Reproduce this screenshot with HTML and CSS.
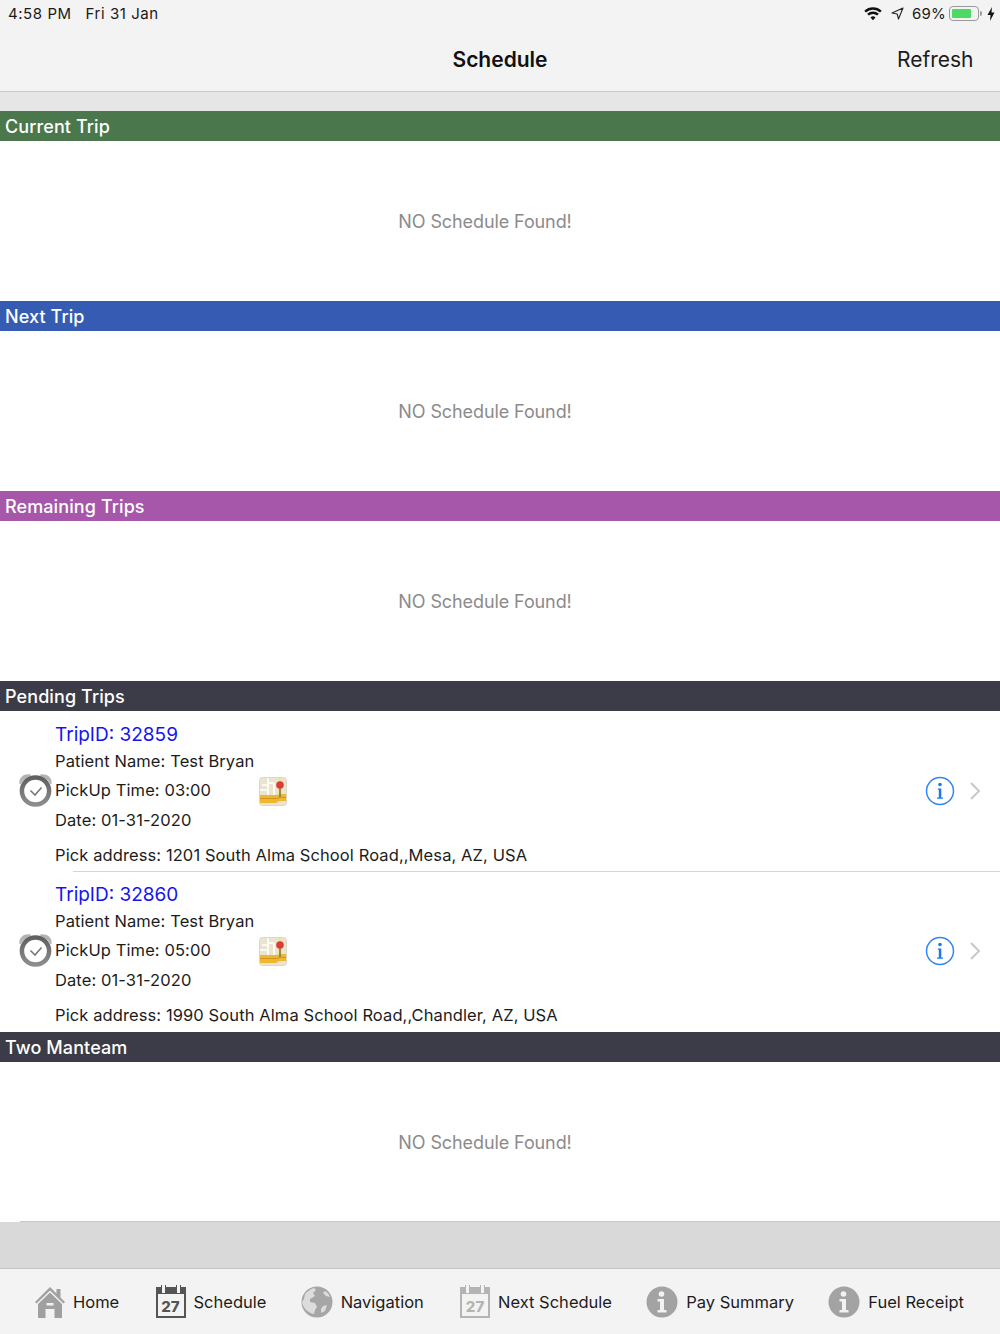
FILE: index.html
```html
<!DOCTYPE html>
<html lang="en">
<head>
<meta charset="utf-8">
<title>Schedule</title>
<link rel="stylesheet" href="styles.css">
</head>
<body>
<svg class="defs" width="0" height="0" aria-hidden="true">
  <defs>
    <linearGradient id="ring" x1="0" y1="0" x2="0" y2="1">
      <stop offset="0" stop-color="#5f6062"/>
      <stop offset="1" stop-color="#8c8d8f"/>
    </linearGradient>
    <symbol id="clock" viewBox="0 0 34 34">
      <path d="M.5 11C-.5 4.500 5 .2 11.500 1.500L12 3.200C7 4.500 3.500 7 1.800 11Z" fill="#b4b4b4"/>
      <path d="M32.500 11C33.500 4.500 28 .2 21.500 1.500L21 3.200C26 4.500 29.500 7 31.200 11Z" fill="#b4b4b4"/>
      <circle cx="16.500" cy="18" r="13.600" fill="#fff" stroke="url(#ring)" stroke-width="4.500"/>
      <path d="M11.500 17.500l4.500 4.500 6.500-7.500" fill="none" stroke="#77787a" stroke-width="1.600"/>
    </symbol>
    <symbol id="map" viewBox="0 0 28 29">
      <rect x=".5" y=".5" width="27" height="28" rx="3" fill="#ebe4cf" stroke="#dcd7c7"/>
      <path d="M9 1v9M3 8h5l1 2v8M15 6v12M9 6h6M1 13h7" fill="none" stroke="#fff" stroke-width="1.600"/>
      <path d="M19 1h4v17h-4z" fill="#efe3a0"/>
      <path d="M1 18h17l3-1h6v7h-7l-3 2H1z" fill="#eeb82e"/>
      <path d="M1 21.500h17l3-1h6" fill="none" stroke="#d5951c" stroke-width="1"/>
      <path d="M21 9v11" stroke="#7d7c4c" stroke-width="1.600"/>
      <circle cx="21" cy="8" r="3.800" fill="#dd3b33"/>
    </symbol>
    <symbol id="info-circle" viewBox="0 0 30 30">
      <circle cx="15" cy="15" r="13.500" fill="none" stroke="#2f86f6" stroke-width="1.500"/>
      <circle cx="15" cy="8.500" r="1.800" fill="#1c78f2"/>
      <path d="M12.800 12.500h3.500v9h1.700v1.300h-6v-1.300h1.800v-7.700h-1z" fill="#1c78f2"/>
    </symbol>
    <symbol id="chevron" viewBox="0 0 12 20">
      <path d="M2 2l8 8-8 8" fill="none" stroke="#c7c7cc" stroke-width="2"/>
    </symbol>
    <symbol id="home" viewBox="0 0 30 32">
      <path d="M0 16 15 1l6.500 6.500V3h4v8.500L30 16l-1.500 1.500L15 4.500 1.500 17.500Z" fill="#a0a0a0"/>
      <path d="M3 18 15 6.500 27 18v14h-7.500v-9h-9v9H3Z" fill="#a0a0a0"/>
      <path d="M11.500 17h7v2.500h-7z" fill="#f2f2f2"/>
    </symbol>
    <symbol id="globe" viewBox="0 0 32 32">
      <circle cx="16" cy="16" r="15.500" fill="#a6a6a6"/>
      <path d="M4 8c2-2 5-5 9-6l2 2-3 3 2 3-3 2-2 1 0 3 5 1 2 4-2 3-1 4c-6-1-11-6-12-12l2-3ZM22 20l4-1-2 6-4 2 0-4ZM24 5c2 1 4 3 5 6l-4-1-3-3Z" fill="#dcdcdc"/>
    </symbol>
    <symbol id="info-solid" viewBox="0 0 32 32">
      <circle cx="16" cy="16" r="15.500" fill="#a3a3a3"/>
      <circle cx="15.500" cy="8" r="2.800" fill="#f2f2f2"/>
      <path d="M11.500 13h6.500v11h2.500v2.500h-9V24h2.500v-8.500h-2.500z" fill="#f2f2f2"/>
    </symbol>
  </defs>
</svg>

<div class="screen">
  <header class="topbar">
    <div class="status">
      <div class="status-left"><span>4:58 PM</span><span>Fri 31 Jan</span></div>
      <div class="status-right">
        <svg class="ic-wifi" viewBox="0 0 20 15"><path d="M10 14.500 7.200 11.300a4 4 0 0 1 5.600 0ZM5.400 9.300l-1.900-2a9.500 9.500 0 0 1 13 0l-1.900 2a6.800 6.800 0 0 0-9.200 0ZM2.200 5.800.3 3.800a14.300 14.300 0 0 1 19.400 0l-1.900 2a11.500 11.500 0 0 0-15.600 0Z" fill="#111"/></svg>
        <svg class="ic-loc" viewBox="0 0 13 13"><path d="M12 1 1 6l5.200 1L7.500 12Z" fill="none" stroke="#222" stroke-width="1.100" stroke-linejoin="round"/></svg>
        <span class="pct">69%</span>
        <span class="battery"><span class="battery-fill"></span></span>
        <span class="battery-cap"></span>
        <svg class="ic-bolt" viewBox="0 0 8 14"><path d="M5 0 .5 8h3L3 14l4.500-8.500h-3Z" fill="#111"/></svg>
      </div>
    </div>
    <div class="nav">
      <span class="nav-side"></span>
      <h1 class="nav-title">Schedule</h1>
      <span class="nav-side nav-action">Refresh</span>
    </div>
  </header>
  <div class="spacer"></div>

  <section>
    <h2 class="band band-green">Current Trip</h2>
    <div class="empty">NO Schedule Found!</div>
  </section>
  <section>
    <h2 class="band band-blue">Next Trip</h2>
    <div class="empty">NO Schedule Found!</div>
  </section>
  <section>
    <h2 class="band band-purple">Remaining Trips</h2>
    <div class="empty">NO Schedule Found!</div>
  </section>
  <section>
    <h2 class="band band-dark">Pending Trips</h2>
    <article class="trip trip-sep">
      <svg class="clock"><use href="#clock"/></svg>
      <div class="trip-text">
        <div class="trip-id">TripID: 32859</div>
        <div class="line line-patient">Patient Name: Test Bryan</div>
        <div class="line line-time"><span class="time">PickUp Time: 03:00</span><svg class="map"><use href="#map"/></svg></div>
        <div class="line line-date">Date: 01-31-2020</div>
        <div class="line line-addr">Pick address: 1201 South Alma School Road,,Mesa, AZ, USA</div>
      </div>
      <svg class="info"><use href="#info-circle"/></svg>
      <svg class="chev"><use href="#chevron"/></svg>
    </article>
    <article class="trip trip-last">
      <svg class="clock"><use href="#clock"/></svg>
      <div class="trip-text">
        <div class="trip-id">TripID: 32860</div>
        <div class="line line-patient">Patient Name: Test Bryan</div>
        <div class="line line-time"><span class="time">PickUp Time: 05:00</span><svg class="map"><use href="#map"/></svg></div>
        <div class="line line-date">Date: 01-31-2020</div>
        <div class="line line-addr">Pick address: 1990 South Alma School Road,,Chandler, AZ, USA</div>
      </div>
      <svg class="info"><use href="#info-circle"/></svg>
      <svg class="chev"><use href="#chevron"/></svg>
    </article>
  </section>
  <section>
    <h2 class="band band-dark">Two Manteam</h2>
    <div class="empty empty-last">NO Schedule Found!</div>
  </section>

  <div class="footer-gap"></div>

  <nav class="tabs">
    <a class="tab"><svg class="tab-ic tab-home"><use href="#home"/></svg>Home</a>
    <a class="tab">
      <span class="cal cal-dark"><span class="cal-num">27</span></span>Schedule
    </a>
    <a class="tab"><svg class="tab-ic tab-round"><use href="#globe"/></svg>Navigation</a>
    <a class="tab">
      <span class="cal cal-light"><span class="cal-num">27</span></span>Next Schedule
    </a>
    <a class="tab"><svg class="tab-ic tab-round"><use href="#info-solid"/></svg>Pay Summary</a>
    <a class="tab"><svg class="tab-ic tab-round"><use href="#info-solid"/></svg>Fuel Receipt</a>
  </nav>
</div>
</body>
</html>
```
FILE: styles.css
```css
* { box-sizing: border-box; }
html, body { margin: 0; padding: 0; }
body {
  font-family: Inter, "Liberation Sans", sans-serif;
  background: #fff;
  color: #1c1c1c;
}
.defs { position: absolute; }
.screen { width: 1000px; height: 1334px; overflow: hidden; display: flex; flex-direction: column; }

.topbar { height: 92px; background: #f3f3f3; border-bottom: 1px solid #c9c9c9; }
.status {
  height: 27px;
  padding: 0 5px 0 8px;
  display: flex;
  justify-content: space-between;
  align-items: center;
  font-size: 15px;
  letter-spacing: .55px;
  color: #1a1a1a;
}
.status-left { display: flex; gap: 14px; }
.status-right { display: flex; align-items: center; }
.ic-wifi { width: 18px; height: 14px; margin-right: 9px; }
.ic-loc { width: 13px; height: 13px; margin-right: 8px; }
.pct { margin-right: 3px; letter-spacing: .2px; }
.battery {
  width: 30px; height: 15px;
  border: 1px solid #9a9a9a;
  border-radius: 4px;
  padding: 2px;
  display: flex;
}
.battery-fill { width: 19px; background: #4cd964; border-radius: 1px; }
.battery-cap { width: 2px; height: 5px; background: #9a9a9a; margin-left: 1px; margin-right: 5px; border-radius: 0 2px 2px 0; }
.ic-bolt { width: 8px; height: 14px; }

.nav { height: 64px; padding: 0 27px 0 0; display: flex; align-items: center; justify-content: space-between; }
.nav-side { width: 76px; font-size: 21px; white-space: nowrap; text-align: right; }
.nav-title { margin: 0 0 0 27px; font-size: 21px; font-weight: 600; color: #111; }
.nav-action { color: #1c1c1c; }

.spacer { height: 19px; background: #e6e6e6; }

.band {
  height: 30px;
  margin: 0;
  padding-left: 5px;
  font-size: 18px;
  font-weight: 500;
  letter-spacing: .1px;
  line-height: 32px;
  color: #fff;
}
.band-green { background: #4a774c; }
.band-blue { background: #355bb3; }
.band-purple { background: #a657aa; }
.band-dark { background: #3b3c47; }

.empty {
  height: 160px;
  padding-right: 30px;
  display: flex;
  align-items: center;
  justify-content: center;
  font-size: 18px;
  letter-spacing: -.1px;
  color: #8b8b8b;
}
.empty-last { position: relative; }
.empty-last::after {
  content: "";
  position: absolute;
  left: 20px; right: 0; bottom: 0;
  height: 1px;
  background: #c6c6c6;
}

.trip {
  position: relative;
  height: 160px;
  padding: 9px 0 0 19px;
  display: flex;
}
.trip-last { height: 161px; }
.trip-sep::after {
  content: "";
  position: absolute;
  left: 73px; right: 0; bottom: -1px;
  height: 1px;
  background: #d4d4d4;
}
.clock { width: 34px; height: 34px; margin: 53px 2px 0 0; flex: none; }
.trip-text { flex: 1; font-size: 16.500px; letter-spacing: .1px; color: #1c1c1c; }
.trip-id { height: 28px; line-height: 30px; font-size: 19px; letter-spacing: 0; color: #1414f0; }
.line { white-space: nowrap; }
.line-patient { height: 27px; line-height: 27px; }
.line-time { height: 30px; line-height: 30px; display: flex; }
.time { width: 204px; }
.map { width: 28px; height: 29px; margin-top: 2px; flex: none; }
.line-date { height: 30px; line-height: 30px; }
.line-addr { height: 36px; padding-top: 4px; line-height: 32px; }
.info { width: 30px; height: 30px; margin: 56px 0 0; flex: none; }
.chev { width: 12px; height: 20px; margin: 61px 19px 0 14px; flex: none; }

.footer-gap { height: 47px; background: #d9d9d9; border-bottom: 1px solid #c6c6c6; }

.tabs {
  flex: 1;
  padding: 0 36px 0 35px;
  background: #f3f3f3;
  display: flex;
  align-items: center;
  justify-content: space-between;
  font-size: 16.500px;
  color: #1c1c1c;
}
.tab { display: flex; align-items: center; white-space: nowrap; }
.tab-ic { flex: none; }
.tab-home { width: 30px; height: 32px; margin-right: 8px; }
.tab-round { width: 32px; height: 32px; margin-right: 8px; }

.cal {
  position: relative;
  width: 30px; height: 31px;
  margin: 1px 8px 0 2px;
  border-style: solid;
  border-width: 7px 2px 2px;
  display: flex;
  align-items: flex-end;
  justify-content: center;
}
.cal::before, .cal::after {
  content: "";
  position: absolute;
  top: -9px;
  width: 3px; height: 8px;
  background: inherit;
  border: 1px solid;
  border-top: 0;
  border-color: inherit;
}
.cal::before { left: 3px; }
.cal::after { right: 3px; }
.cal-num { font-size: 15px; line-height: 19px; font-weight: 800; }
.cal-dark { border-color: #555; color: #555; background: #f3f3f3; }
.cal-light { border-color: #b4b4b4; color: #b4b4b4; background: #f3f3f3; }
```
